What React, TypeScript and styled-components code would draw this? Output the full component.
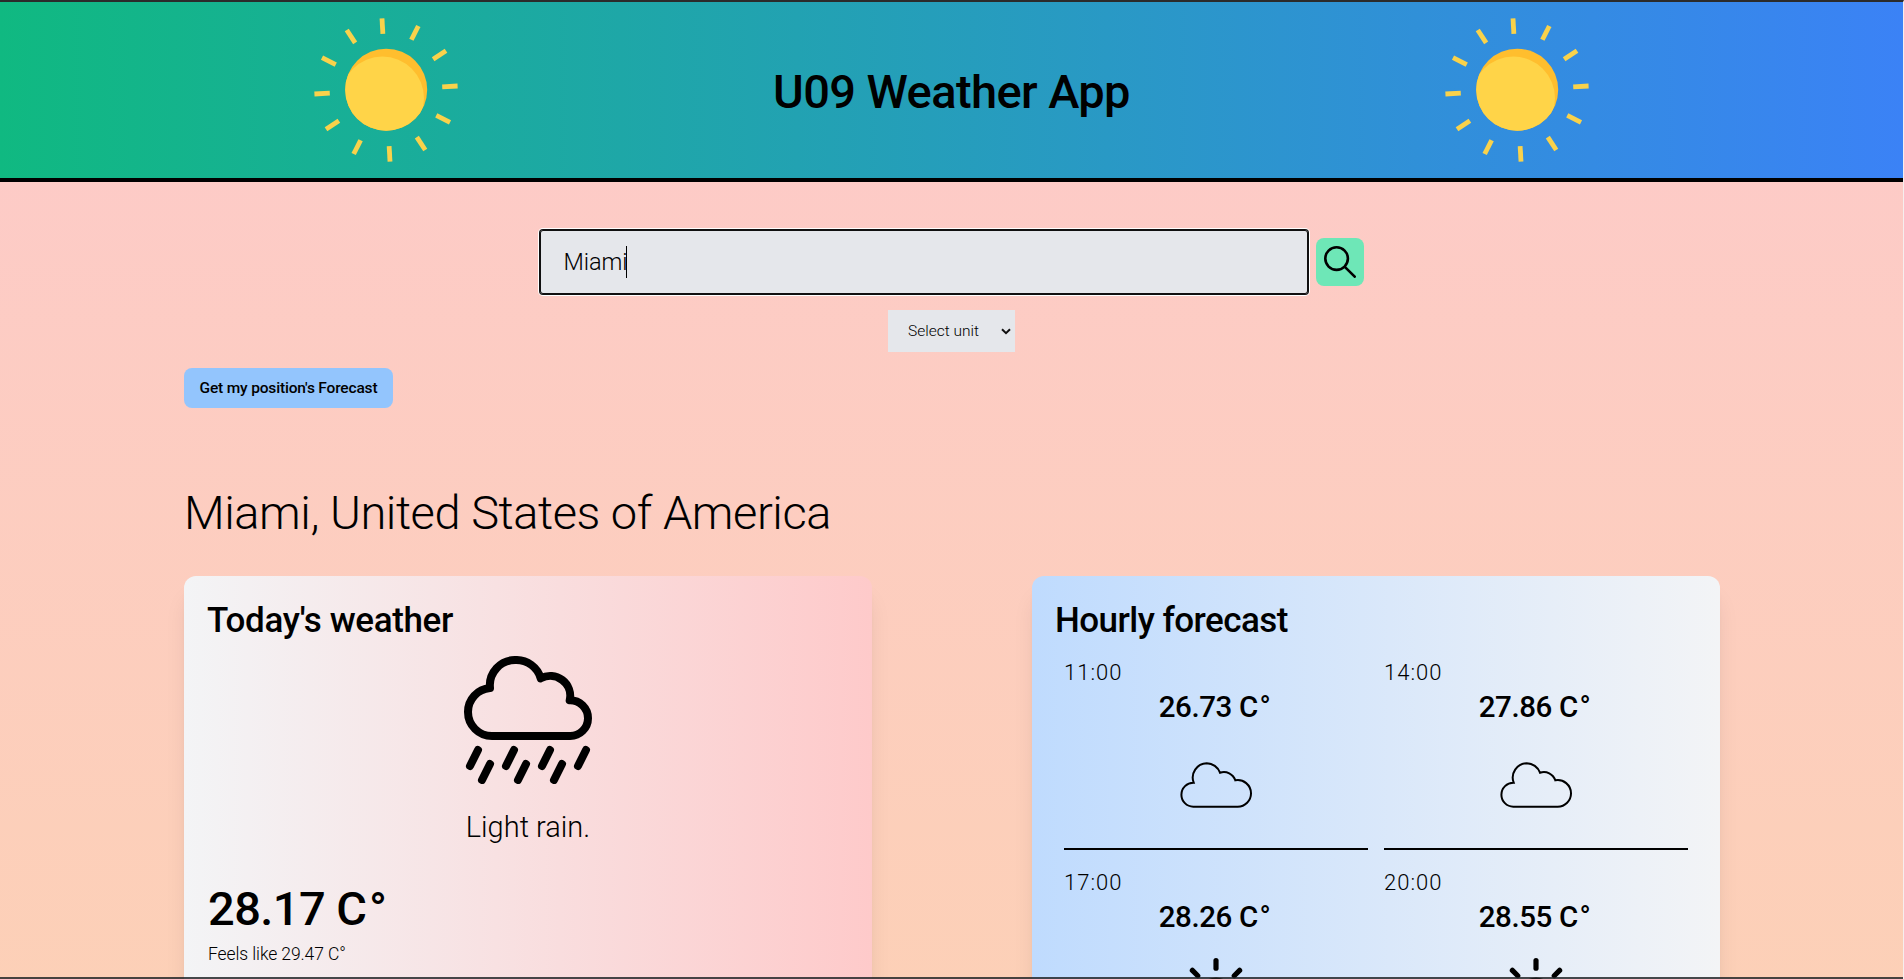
import React from 'react';
import styled, { createGlobalStyle } from 'styled-components';

const GlobalStyle = createGlobalStyle`
  *, *::before, *::after { box-sizing: border-box; }
  body { margin: 0; overflow: hidden; }
  h1, h2, h3, p { margin: 0; }
  body, button, input, select { font-family: Roboto, "Open Sans", sans-serif; color: #000; }
`;

const Page = styled.div`
  position: relative;
  height: 979px;
  overflow: hidden;
  border-top: 2px solid #2b2b2b;
  border-right: 1px solid #f6eeee;
  background: linear-gradient(to bottom, #fdcaca, #fcd4aa) 0 0 / 100% 1650px no-repeat;
`;

const BottomEdge = styled.div`
  position: absolute;
  left: 0;
  right: 0;
  bottom: 0;
  height: 2px;
  background: rgba(30, 34, 36, 0.82);
`;

const Header = styled.header`
  display: flex;
  align-items: center;
  justify-content: space-evenly;
  height: 180px;
  border-bottom: 4px solid #000;
  background: linear-gradient(to right, #10b981, #3b82f6);
`;

const Title = styled.h1`
  width: 359px;
  text-align: center;
  white-space: nowrap;
  font-size: 47px;
  line-height: 48px;
  font-weight: 500;
  letter-spacing: -0.6px;
  padding-top: 3px;
`;

const Main = styled.main`
  width: 1536px;
  margin: 0 0 0 184px;
  padding-top: 48px;
  display: flex;
  flex-direction: column;
  align-items: center;
`;

const SearchRow = styled.form`
  display: flex;
  align-items: center;
  gap: 8px;
`;

const SearchBox = styled.div`
  display: flex;
  align-items: center;
  width: 768px;
  height: 64px;
  padding-left: 23.5px;
  border-radius: 3px;
  background: #e5e7eb;
  box-shadow: inset 0 0 0 1px #101010, 0 0 0 1px #101010, 0 0 0 2px #fff;
  font-size: 23.5px;
  font-weight: 350;
  line-height: 32px;
  letter-spacing: -0.1px;
`;

const Caret = styled.span`
  width: 1px;
  height: 32px;
  margin-left: -1px;
  background: #000;
`;

const SearchButton = styled.button`
  width: 48px;
  height: 48px;
  padding: 8px;
  border: 0;
  border-radius: 8px;
  background: #6ee7b7;
  svg { display: block; }
`;

const UnitSelect = styled.div`
  display: flex;
  align-items: center;
  justify-content: space-between;
  width: 127px;
  height: 42px;
  margin: 16px 1px 0 0;
  padding: 0 4px 0 20px;
  background: #e5e7eb;
  font-size: 15.5px;
  font-weight: 350;
`;

const PositionButton = styled.button`
  align-self: flex-start;
  width: 209px;
  height: 40px;
  margin-top: 16px;
  padding: 0;
  border: 0;
  border-radius: 8px;
  background: #93c5fd;
  font-size: 15.5px;
  font-weight: 500;
  letter-spacing: -0.17px;
  white-space: nowrap;
`;

const Place = styled.h2`
  align-self: flex-start;
  margin: 81px 0 39px;
  font-size: 47px;
  line-height: 48px;
  font-weight: 330;
  letter-spacing: -0.45px;
`;

const Cards = styled.div`
  display: flex;
  justify-content: space-between;
  width: 100%;
`;

const Card = styled.section<{ $from: string; $to: string }>`
  width: 688px;
  height: 720px;
  padding: 25px 24px;
  border-radius: 12px;
  background: linear-gradient(to right, ${(p) => p.$from}, ${(p) => p.$to});
  box-shadow: 0 20px 25px -5px rgba(0, 0, 0, 0.1), 0 8px 10px -6px rgba(0, 0, 0, 0.1);
`;

const CardTitle = styled.h3<{ $spacing: number }>`
  margin-left: -1px;
  font-size: 35px;
  line-height: 40px;
  font-weight: 500;
  letter-spacing: ${(p) => p.$spacing}px;
`;

const Summary = styled.div`
  display: flex;
  flex-direction: column;
  align-items: center;
  margin-top: 15px;
`;

const Description = styled.p`
  margin-top: 25px;
  font-size: 29px;
  line-height: 36px;
  font-weight: 330;
`;

const CurrentTemp = styled.p`
  margin-top: 40px;
  font-size: 47px;
  line-height: 48px;
  font-weight: 500;
  letter-spacing: -0.55px;
`;

const FeelsLike = styled.p`
  margin-top: 7px;
  font-size: 17.5px;
  line-height: 28px;
  font-weight: 350;
  letter-spacing: -0.1px;
`;

const Unit = styled.span`
  letter-spacing: 0.04em;
`;

const HourGrid = styled.div`
  display: grid;
  grid-template-columns: 304px 304px;
  gap: 16px;
  margin: 15px 8px 0;
`;

const Hour = styled.div`
  display: flex;
  flex-direction: column;
  align-items: center;
  height: 194px;
  border-bottom: 2px solid #000;
`;

const HourTime = styled.span`
  align-self: flex-start;
  font-size: 22px;
  line-height: 34px;
  font-weight: 340;
  letter-spacing: 1px;
`;

const HourTemp = styled.span`
  margin: 0 3px 24px 0;
  font-size: 29.5px;
  line-height: 34px;
  font-weight: 500;
  letter-spacing: -0.4px;
`;

const angles = Array.from({ length: 12 }, (_, i) => i * 30 - 3.2);

const HeaderSun = ({ id }: { id: string }) => (
  <svg width="176" height="176" viewBox="0 0 176 176">
    <clipPath id={id}>
      <circle cx="88.2" cy="87.7" r="41" />
    </clipPath>
    <circle cx="88.2" cy="87.7" r="41" fill="#ffbe2e" />
    <circle cx="84.4" cy="96.2" r="41.6" fill="#ffd448" clipPath={`url(#${id})`} />
    <g stroke="#f9d24b" strokeWidth="4.8">
      {angles.map((a) => (
        <line key={a} x1="88" y1="16.3" x2="88" y2="31.7" transform={`rotate(${a} 88 88)`} />
      ))}
    </g>
  </svg>
);

const SearchIcon = () => (
  <svg width="32" height="32" viewBox="0 0 32 32" fill="none" stroke="#000" strokeWidth="2.6" strokeLinecap="round">
    <circle cx="12.6" cy="12.6" r="11.3" />
    <path d="M20.8 20.8 30.7 30.7" />
  </svg>
);

const Chevron = () => (
  <svg width="10" height="7" viewBox="0 0 10 7" fill="none" stroke="#101010" strokeWidth="2">
    <path d="M1 1.2 5 5.2 9 1.2" />
  </svg>
);

const RainIcon = () => (
  <svg width="128" height="128" viewBox="0 0 128 128" fill="none" stroke="#000" strokeWidth="8" strokeLinecap="round" strokeLinejoin="round">
    <path d="M28 80A24 24 0 0 1 4 56A24 24 0 0 1 26 32A25.4 25.4 0 0 1 51.7 4A25.4 25.4 0 0 1 76.7 22.3A20 20 0 0 1 105.7 44.3A17.9 17.9 0 0 1 124 62.2A17.9 17.9 0 0 1 106.2 80Z" />
    <path d="M14 94 6 110M50 94 42 110M86 94 78 110M122 94 114 110M26 108 18 124M62 108 54 124M98 108 90 124" />
  </svg>
);

const CloudIcon = () => (
  <svg width="72" height="72" viewBox="0 0 72 72" fill="none" stroke="#000" strokeWidth="2" strokeLinejoin="miter">
    <path d="M13.3 58.7A12 12 0 0 1 1.4 46.7A12 12 0 0 1 13.7 34.7A14.3 14.3 0 0 1 26.7 15.3A14.3 14.3 0 0 1 40 24.7A12 12 0 0 1 55.3 32.3A13.3 13.3 0 0 1 71 45.3A13.3 13.3 0 0 1 57.7 58.7Z" />
  </svg>
);

const SunIcon = () => (
  <svg width="72" height="72" viewBox="0 0 72 72" fill="none" stroke="#000" strokeWidth="5.2" strokeLinecap="round">
    <circle cx="36" cy="36" r="14" />
    {[0, 45, 90, 135, 180, 225, 270, 315].map((a) => (
      <line key={a} x1="36" y1="2.6" x2="36" y2="10.2" transform={`rotate(${a} 36 36)`} />
    ))}
  </svg>
);

const hours = [
  { time: '11:00', temp: '26.73', icon: 'cloud' },
  { time: '14:00', temp: '27.86', icon: 'cloud' },
  { time: '17:00', temp: '28.26', icon: 'sun' },
  { time: '20:00', temp: '28.55', icon: 'sun' },
];

export default function App() {
  return (
    <Page>
      <GlobalStyle />
      <Header>
        <HeaderSun id="sun-left" />
        <Title>U09 Weather App</Title>
        <HeaderSun id="sun-right" />
      </Header>
      <Main>
        <SearchRow>
          <SearchBox>
            Miami
            <Caret />
          </SearchBox>
          <SearchButton type="button" aria-label="Search">
            <SearchIcon />
          </SearchButton>
        </SearchRow>
        <UnitSelect>
          Select unit
          <Chevron />
        </UnitSelect>
        <PositionButton type="button">Get my position's Forecast</PositionButton>
        <Place>Miami, United States of America</Place>
        <Cards>
          <Card $from="#f3f4f6" $to="#fecaca">
            <CardTitle $spacing={-0.37}>Today's weather</CardTitle>
            <Summary>
              <RainIcon />
              <Description>Light rain.</Description>
            </Summary>
            <CurrentTemp>
              28.17 <Unit>C</Unit>°
            </CurrentTemp>
            <FeelsLike>Feels like 29.47 C°</FeelsLike>
          </Card>
          <Card $from="#bfdbfe" $to="#f3f4f6">
            <CardTitle $spacing={-0.55}>Hourly forecast</CardTitle>
            <HourGrid>
              {hours.map((h) => (
                <Hour key={h.time}>
                  <HourTime>{h.time}</HourTime>
                  <HourTemp>
                    {h.temp} <Unit>C</Unit>°
                  </HourTemp>
                  {h.icon === 'cloud' ? <CloudIcon /> : <SunIcon />}
                </Hour>
              ))}
            </HourGrid>
          </Card>
        </Cards>
      </Main>
      <BottomEdge />
    </Page>
  );
}
